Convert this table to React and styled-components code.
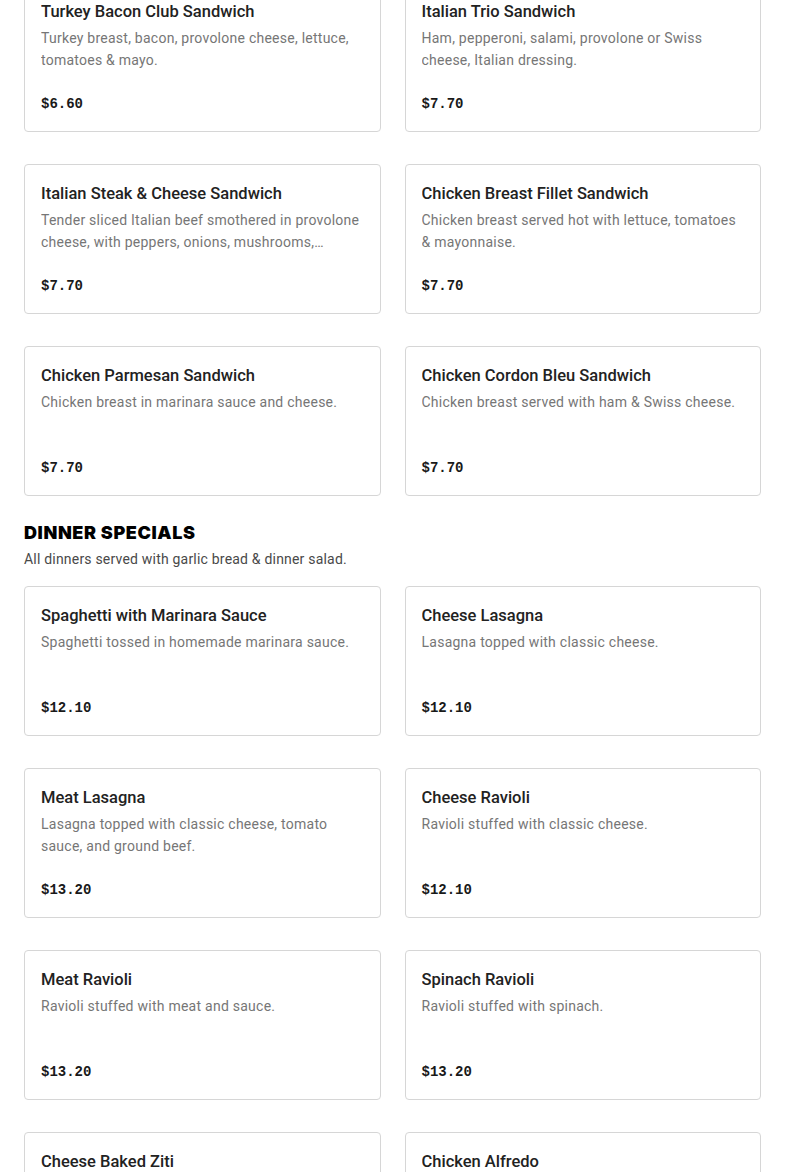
import React from "react";
import styled, { createGlobalStyle } from "styled-components";

const sandwiches = [
  {
    name: "Turkey Bacon Club Sandwich",
    desc: "Turkey breast, bacon, provolone cheese, lettuce, tomatoes & mayo.",
    price: "$6.60",
  },
  {
    name: "Italian Trio Sandwich",
    desc: "Ham, pepperoni, salami, provolone or Swiss cheese, Italian dressing.",
    price: "$7.70",
  },
  {
    name: "Italian Steak & Cheese Sandwich",
    desc: "Tender sliced Italian beef smothered in provolone cheese, with peppers, onions, mushrooms, lettuce, tomatoes & mayo.",
    price: "$7.70",
  },
  {
    name: "Chicken Breast Fillet Sandwich",
    desc: "Chicken breast served hot with lettuce, tomatoes & mayonnaise.",
    price: "$7.70",
  },
  {
    name: "Chicken Parmesan Sandwich",
    desc: "Chicken breast in marinara sauce and cheese.",
    price: "$7.70",
  },
  {
    name: "Chicken Cordon Bleu Sandwich",
    desc: "Chicken breast served with ham & Swiss cheese.",
    price: "$7.70",
  },
];

const dinners = [
  {
    name: "Spaghetti with Marinara Sauce",
    desc: "Spaghetti tossed in homemade marinara sauce.",
    price: "$12.10",
  },
  {
    name: "Cheese Lasagna",
    desc: "Lasagna topped with classic cheese.",
    price: "$12.10",
  },
  {
    name: "Meat Lasagna",
    desc: "Lasagna topped with classic cheese, tomato sauce, and ground beef.",
    price: "$13.20",
  },
  {
    name: "Cheese Ravioli",
    desc: "Ravioli stuffed with classic cheese.",
    price: "$12.10",
  },
  {
    name: "Meat Ravioli",
    desc: "Ravioli stuffed with meat and sauce.",
    price: "$13.20",
  },
  {
    name: "Spinach Ravioli",
    desc: "Ravioli stuffed with spinach.",
    price: "$13.20",
  },
  {
    name: "Cheese Baked Ziti",
    desc: "Ziti baked with marinara sauce and cheese.",
    price: "$12.10",
  },
  {
    name: "Chicken Alfredo",
    desc: "Fettuccine in creamy alfredo sauce with chicken.",
    price: "$13.20",
  },
];

export default function App() {
  return (
    <>
      <GlobalStyle />
      <Page>
        <Grid>
          {sandwiches.map((item) => (
            <MenuCard key={item.name} {...item} />
          ))}
        </Grid>
        <Section>
          <SectionTitle>DINNER SPECIALS</SectionTitle>
          <SectionNote>All dinners served with garlic bread &amp; dinner salad.</SectionNote>
        </Section>
        <Grid>
          {dinners.map((item) => (
            <MenuCard key={item.name} {...item} />
          ))}
        </Grid>
      </Page>
    </>
  );
}

function MenuCard({ name, desc, price }) {
  return (
    <Card>
      <Title>{name}</Title>
      <Desc>{desc}</Desc>
      <Price>{price}</Price>
    </Card>
  );
}

const GlobalStyle = createGlobalStyle`
  body {
    margin: 0;
    background: #fff;
    font-family: Roboto, "Liberation Sans", sans-serif;
    color: #191919;
  }
`;

const Page = styled.div`
  padding: 0 24px;
  margin-top: -18px;
`;

const Grid = styled.div`
  display: grid;
  grid-template-columns: 1fr 1fr;
  column-gap: 24px;
  row-gap: 32px;
`;

const Section = styled.div`
  padding: 24px 0 16px;
`;

const SectionTitle = styled.h2`
  margin: 0;
  font-family: Inter, "Noto Sans", sans-serif;
  font-weight: 900;
  font-size: 18px;
  line-height: 26px;
  letter-spacing: 0.6px;
  color: #000;
`;

const SectionNote = styled.p`
  margin: 2px 0 0;
  font-size: 14px;
  line-height: 22px;
  letter-spacing: 0.2px;
  color: #494949;
`;

const Card = styled.div`
  display: flex;
  flex-direction: column;
  height: 150px;
  box-sizing: border-box;
  border: 1px solid #d6d6d6;
  border-radius: 4px;
  padding: 16px 16px 16px;
  min-width: 0;
`;

const Title = styled.div`
  padding-top: 1px;
  font-size: 16.5px;
  font-weight: 500;
  line-height: 24px;
  color: #222;
  white-space: nowrap;
  overflow: hidden;
  text-overflow: ellipsis;
`;

const Desc = styled.div`
  margin-top: 3px;
  font-size: 14px;
  line-height: 22px;
  letter-spacing: 0.25px;
  color: #767676;
  display: -webkit-box;
  -webkit-line-clamp: 2;
  -webkit-box-orient: vertical;
  overflow: hidden;
`;

const Price = styled.div`
  margin-top: auto;
  padding-bottom: 1px;
  font-family: "Liberation Mono", "DejaVu Sans Mono", monospace;
  font-weight: 700;
  font-size: 14px;
  line-height: 20px;
  color: #191919;
`;
